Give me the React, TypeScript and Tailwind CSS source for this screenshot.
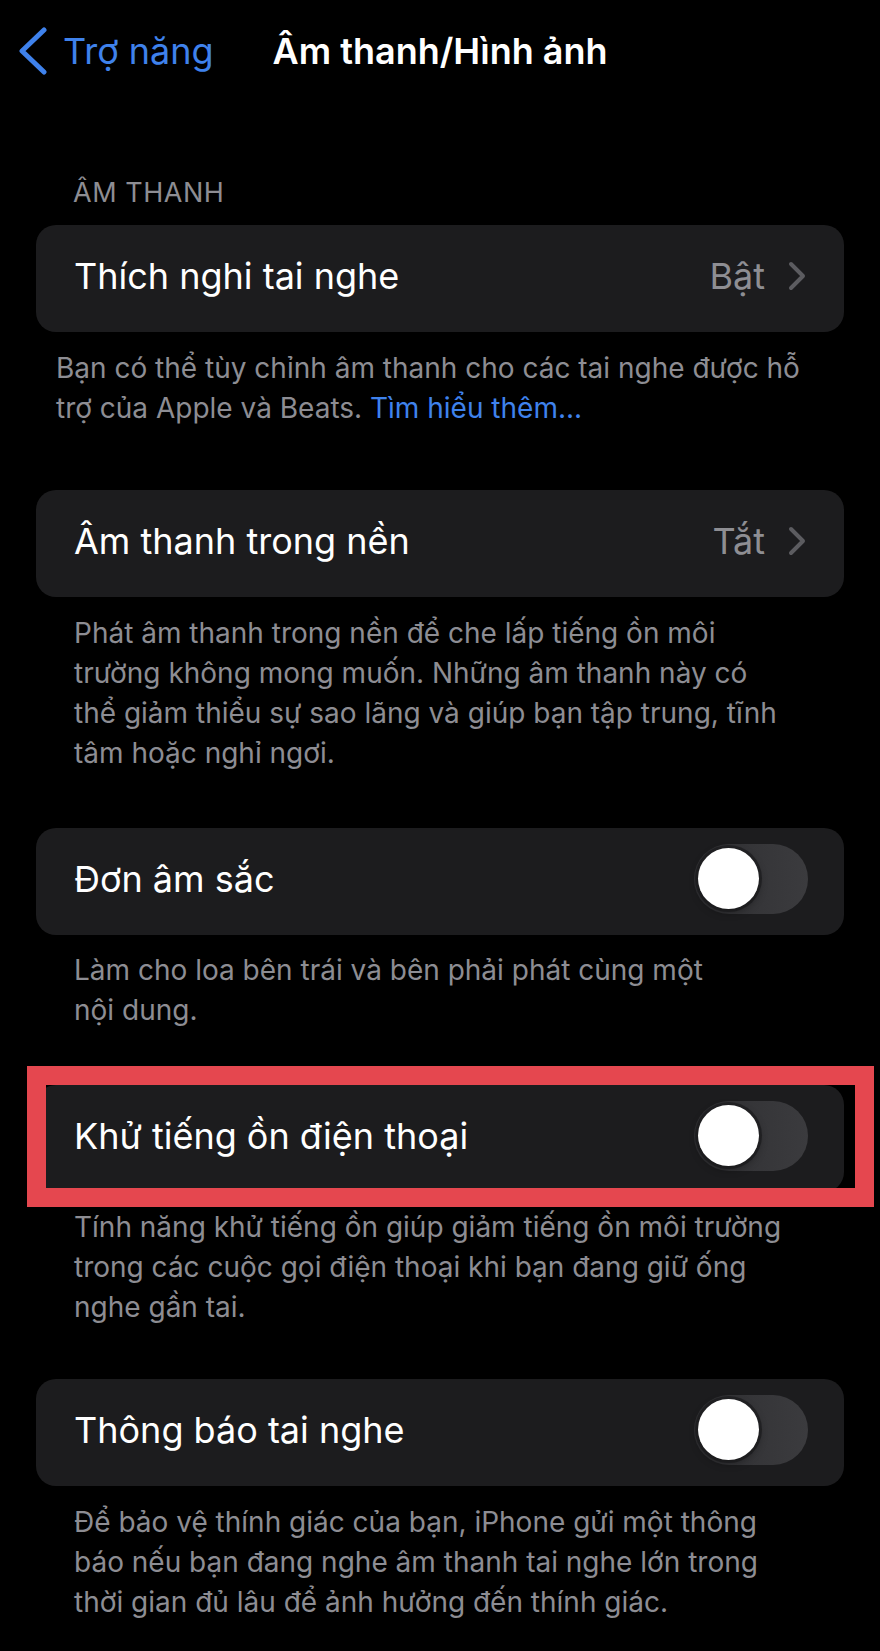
import type { ReactNode } from 'react'

// ── Small pieces ──────────────────────────────────────────────────────────────

function BackChevron() {
  return (
    <svg width="30" height="48" viewBox="0 0 30 48" fill="none" className="shrink-0">
      <polyline
        points="25,3 3,24 25,45"
        stroke="#3f82ec"
        strokeWidth="5"
        strokeLinecap="round"
        strokeLinejoin="round"
      />
    </svg>
  )
}

function RowChevron() {
  return (
    <svg width="20" height="30" viewBox="0 0 20 30" fill="none" className="shrink-0">
      <polyline
        points="4,3 16,15 4,27"
        stroke="#5c5c60"
        strokeWidth="4"
        strokeLinecap="round"
        strokeLinejoin="round"
      />
    </svg>
  )
}

function Toggle() {
  return (
    <div className="flex h-[70px] w-[114px] shrink-0 items-center rounded-full bg-gradient-to-r from-[#2f2f32] to-[#3b3b3e] pl-[4px]">
      <span className="block h-[61px] w-[61px] rounded-full bg-white shadow-[0_0_0_3px_rgba(20,20,22,0.55),0_3px_8px_rgba(0,0,0,0.4)]" />
    </div>
  )
}

// ── Rows and footers ──────────────────────────────────────────────────────────

function Row({ label, right }: { label: string; right: ReactNode }) {
  return (
    <div className="flex h-[107px] items-center justify-between rounded-[20px] bg-[#1c1c1e] pb-[6px] pl-[38px] pr-[36px]">
      <span className="text-[36px] leading-[44px] text-white">{label}</span>
      {right}
    </div>
  )
}

function Detail({ value }: { value: string }) {
  return (
    <div className="flex items-center gap-[22px] pr-[1px]">
      <span className="text-[36px] leading-[44px] text-[#8e8e93]">{value}</span>
      <RowChevron />
    </div>
  )
}

function Footer({ lines, className }: { lines: ReactNode[]; className: string }) {
  return (
    <div className={`text-[28px] leading-[40px] text-[#8d8d93] ${className}`}>
      {lines.map((line, i) => (
        <span key={i} className="block whitespace-nowrap">
          {line}
        </span>
      ))}
    </div>
  )
}

// ── Page ──────────────────────────────────────────────────────────────────────

export default function App() {
  return (
    <main
      className="min-h-[1651px] w-[880px] bg-black pb-[40px]"
      style={{ fontFamily: 'Inter, "Noto Sans", sans-serif' }}
    >
      {/* Nav bar */}
      <header className="grid grid-cols-[1fr_auto_1fr] items-center pt-[27px]">
        <div className="flex items-center gap-[14px] pl-[19px]">
          <BackChevron />
          <span className="text-[36px] leading-[44px] text-[#3f82ec]">Trợ năng</span>
        </div>
        <h1 className="text-[36px] font-semibold leading-[44px] text-white">Âm thanh/Hình ảnh</h1>
        <div />
      </header>

      <section className="px-[36px]">
        <h2 className="ml-[37px] mt-[102px] text-[27px] leading-[32px] tracking-[0.02em] text-[#8d8d93]">
          ÂM THANH
        </h2>

        <div className="mt-[16px]">
          <Row label="Thích nghi tai nghe" right={<Detail value="Bật" />} />
        </div>
        <Footer
          className="ml-[20px] mt-[16px]"
          lines={[
            'Bạn có thể tùy chỉnh âm thanh cho các tai nghe được hỗ',
            <>
              trợ của Apple và Beats. <span className="text-[#3f82ec]">Tìm hiểu thêm...</span>
            </>,
          ]}
        />

        <div className="mt-[62px]">
          <Row label="Âm thanh trong nền" right={<Detail value="Tắt" />} />
        </div>
        <Footer
          className="ml-[38px] mt-[16px]"
          lines={[
            'Phát âm thanh trong nền để che lấp tiếng ồn môi',
            'trường không mong muốn. Những âm thanh này có',
            'thể giảm thiểu sự sao lãng và giúp bạn tập trung, tĩnh',
            'tâm hoặc nghỉ ngơi.',
          ]}
        />

        <div className="mt-[55px]">
          <Row label="Đơn âm sắc" right={<Toggle />} />
        </div>
        <Footer
          className="ml-[38px] mt-[15px]"
          lines={['Làm cho loa bên trái và bên phải phát cùng một', 'nội dung.']}
        />

        {/* Highlighted row with the red callout frame drawn over it */}
        <div className="relative mt-[55px]">
          <Row label="Khử tiếng ồn điện thoại" right={<Toggle />} />
          <div className="pointer-events-none absolute -bottom-[15px] -left-[9px] -right-[30px] -top-[19px] border-[19px] border-[#e5474f]" />
        </div>
        <Footer
          className="ml-[38px] mt-[15px]"
          lines={[
            'Tính năng khử tiếng ồn giúp giảm tiếng ồn môi trường',
            'trong các cuộc gọi điện thoại khi bạn đang giữ ống',
            'nghe gần tai.',
          ]}
        />

        <div className="mt-[52px]">
          <Row label="Thông báo tai nghe" right={<Toggle />} />
        </div>
        <Footer
          className="ml-[38px] mt-[16px]"
          lines={[
            'Để bảo vệ thính giác của bạn, iPhone gửi một thông',
            'báo nếu bạn đang nghe âm thanh tai nghe lớn trong',
            'thời gian đủ lâu để ảnh hưởng đến thính giác.',
          ]}
        />
      </section>
    </main>
  )
}
